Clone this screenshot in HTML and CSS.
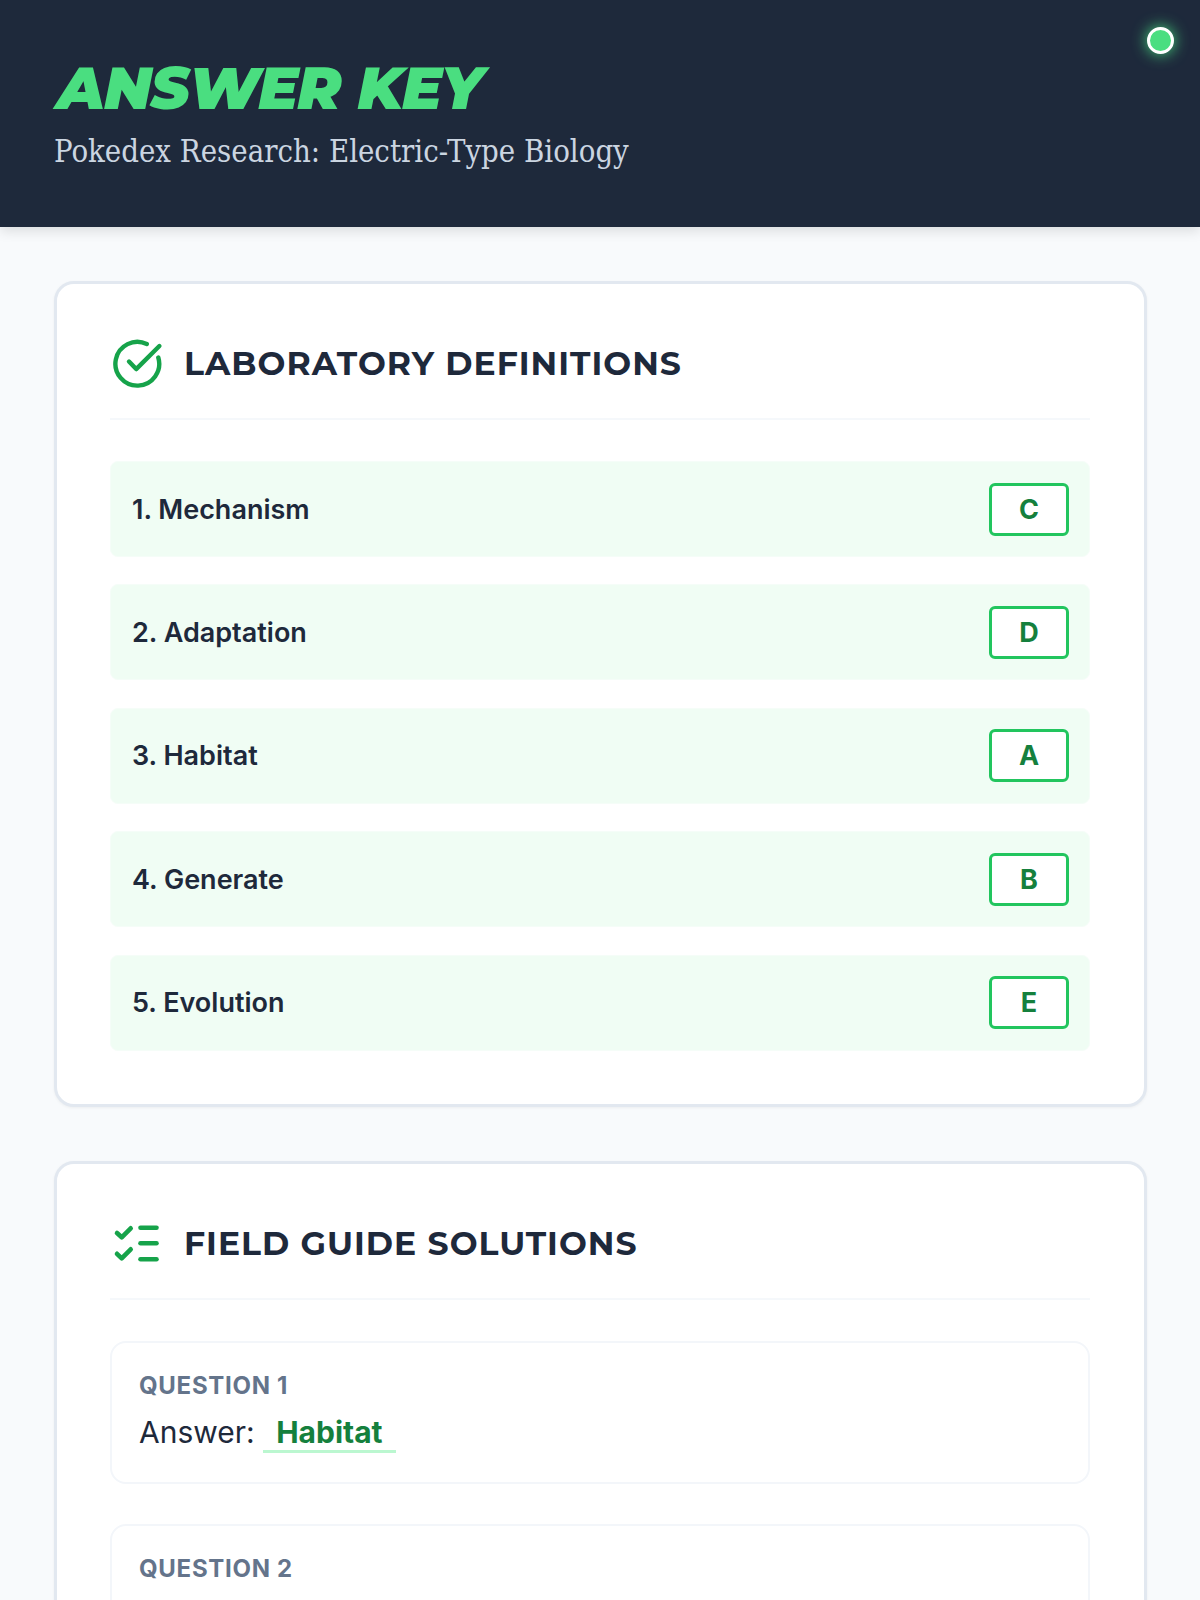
FILE: index.html
```html
<!DOCTYPE html>
<html lang="en">
<head>
<meta charset="utf-8">
<title>Answer Key</title>
<link rel="stylesheet" href="styles.css">
</head>
<body>
<header class="top">
  <h1 class="title">ANSWER KEY</h1>
  <p class="subtitle">Pokedex Research: Electric-Type Biology</p>
  <span class="dot"></span>
</header>
<main class="main">
  <section class="card">
    <div class="card-head">
      <svg class="icon" viewBox="0 0 54 54" fill="none" stroke="#16a34a" stroke-width="4.4" stroke-linecap="round" stroke-linejoin="round"><path d="M48.3 20.5A21.9 21.9 0 1 1 36.8 7"/><path d="M19 24.5l7.2 7.6L49.4 9"/></svg>
      <h2 class="card-title">LABORATORY DEFINITIONS</h2>
    </div>
    <div class="rows">
      <div class="row"><span class="term">1. Mechanism</span><span class="badge">C</span></div>
      <div class="row"><span class="term">2. Adaptation</span><span class="badge">D</span></div>
      <div class="row"><span class="term">3. Habitat</span><span class="badge">A</span></div>
      <div class="row"><span class="term">4. Generate</span><span class="badge">B</span></div>
      <div class="row"><span class="term">5. Evolution</span><span class="badge">E</span></div>
    </div>
  </section>
  <section class="card">
    <div class="card-head">
      <svg class="icon" viewBox="0 0 54 54" fill="none" stroke="#16a34a" stroke-width="4.6" stroke-linecap="round" stroke-linejoin="round"><path d="M7 16l4.7 4.3 9-9"/><path d="M7 36.8l4.7 4.5 9-9"/><path d="M30.5 10.7h16"/><path d="M30.5 26.3h16"/><path d="M30.5 42.3h16"/></svg>
      <h2 class="card-title">FIELD GUIDE SOLUTIONS</h2>
    </div>
    <div class="questions">
      <div class="question">
        <div class="q-label">QUESTION 1</div>
        <div class="q-answer">Answer: <span class="q-value">Habitat</span></div>
      </div>
      <div class="question">
        <div class="q-label">QUESTION 2</div>
      </div>
    </div>
  </section>
</main>
</body>
</html>
```
FILE: styles.css
```css
* { box-sizing: border-box; }
html, body { margin: 0; padding: 0; }
body { background: #f8fafc; font-family: "Inter", sans-serif; color: #1e293b; height: 1600px; overflow: hidden; }
.top { position: relative; height: 227px; background: #1e293b; padding: 56px 54px 0; box-shadow: 0 4px 12px rgba(0,0,0,.12); }
.title { margin: 0 0 0 3px; font-family: "Montserrat", "Inter", sans-serif; font-weight: 900; font-style: italic; font-size: 59.5px; line-height: 64px; letter-spacing: -1px; color: #4ade80; }
.subtitle { margin: 11px 0 0; font-family: "DejaVu Serif Condensed", "Liberation Serif", serif; font-size: 30.8px; line-height: 40px; color: #cbd5e1; }
.dot { position: absolute; top: 27px; right: 26px; width: 27px; height: 27px; border-radius: 50%; background: #4ade80; border: 3px solid #fff; box-shadow: 0 0 15px #4ade80; }
.main { padding: 54px 53px 0 54px; display: flex; flex-direction: column; gap: 54px; }
.card { background: #fff; border: 3px solid #e2e8f0; border-radius: 20px; padding: 53px 54px 53px 53px; box-shadow: 0 1px 3px rgba(0,0,0,.05); }
.card-head { display: flex; align-items: center; gap: 20px; height: 83px; padding-bottom: 27px; border-bottom: 2px solid #f5f8fb; margin-bottom: 41px; }
.icon { width: 54px; height: 54px; flex: none; }
.card-title { margin: -2px 0 0; font-family: "Montserrat", "Inter", sans-serif; font-weight: 700; font-size: 33px; line-height: 40px; letter-spacing: 1px; color: #1e293b; }
.rows { display: flex; flex-direction: column; gap: 27.4px; }
.row { display: flex; align-items: center; justify-content: space-between; height: 96px; padding: 0 20px 0 21px; background: #f0fdf4; border: 1px solid #f5fdf8; border-radius: 8px; }
.term { font-weight: 600; font-size: 27px; }
.badge { width: 80px; height: 53px; display: flex; align-items: center; justify-content: center; background: #fff; border: 3px solid #22c55e; border-radius: 6px; color: #15803d; font-weight: 700; font-size: 27px; }
.questions { display: flex; flex-direction: column; gap: 40px; }
.question { border: 2px solid #f3f6fa; border-radius: 16px; padding: 28px 27px; height: 143px; }
.q-label { font-weight: 700; font-size: 24px; line-height: 30px; letter-spacing: .7px; color: #64748b; }
.q-answer { font-size: 30px; line-height: 40px; margin-top: 11px; color: #1e293b; }
.q-value { display: inline-block; padding: 0 13px; line-height: 35px; color: #15803d; font-weight: 700; border-bottom: 3px solid #bbf7d0; }
```
